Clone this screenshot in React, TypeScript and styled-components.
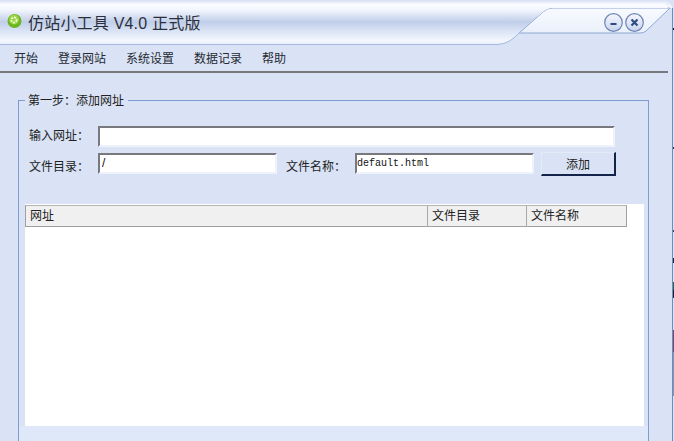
import React, { FunctionComponent } from 'react';
import styled, { createGlobalStyle } from 'styled-components';

const GlobalStyle = createGlobalStyle`
  html, body {
    margin: 0;
    padding: 0;
    background: #d9e3f5;
  }
  * {
    box-sizing: border-box;
  }
`;

const Window = styled.div`
  position: relative;
  width: 674px;
  height: 441px;
  overflow: hidden;
  background: #d9e3f5;
  color: #222;
  font-family: 'Liberation Sans', 'Noto Sans CJK SC', sans-serif;
  font-size: 12px;
`;

const TitleBar = styled.div`
  position: relative;
  display: flex;
  align-items: center;
  height: 45px;
  padding: 0 30px 0 7px;
`;

const TitleChrome = styled.svg`
  position: absolute;
  left: 0;
  top: 0;
`;

const AppIcon = styled.svg`
  position: relative;
  flex: none;
  margin: -3px 5px 0 0;
`;

const Title = styled.div`
  position: relative;
  flex: 1;
  font-size: 16px;
  letter-spacing: 0.2px;
  line-height: 22px;
  margin-top: 2px;
  color: #2b2f3c;
  white-space: nowrap;
`;

const RoundButtons = styled.div`
  position: relative;
  display: flex;
  gap: 2px;
`;

const RoundButton = styled.svg`
  display: block;
`;

const MenuBar = styled.div`
  display: flex;
  gap: 20px;
  align-items: center;
  width: 668px;
  height: 28px;
  padding: 0 14px 0;
  border-bottom: 2px solid #77797d;
`;

const MenuItem = styled.div`
  line-height: 26px;
  margin-top: 1px;
  color: #262a33;
`;

const StepBox = styled.div`
  position: relative;
  width: 631px;
  height: 420px;
  margin: 27px 0 0 18px;
  border: 1px solid #7d9dd0;
  padding: 25px 0 0 6px;
`;

const Legend = styled.div`
  position: absolute;
  left: 6px;
  top: -9px;
  padding: 0 4px 0 3px;
  background: #d9e3f5;
  line-height: 18px;
`;

const Form = styled.div`
  display: flex;
  flex-direction: column;
  gap: 6px;
  padding-left: 4px;
`;

const FormRow = styled.div`
  display: flex;
  align-items: center;
  height: 21px;
`;

const Label = styled.label<{ $width: number; $drop?: number; $indent?: number }>`
  flex: none;
  width: ${(p) => p.$width}px;
  padding-left: ${(p) => p.$indent ?? 0}px;
  line-height: 18px;
  margin-top: ${(p) => p.$drop ?? 0}px;
  white-space: nowrap;
`;

const Input = styled.input<{ $width: number; $mono?: boolean }>`
  flex: none;
  width: ${(p) => p.$width}px;
  height: 21px;
  padding: 0 0 1px ${(p) => (p.$mono ? 0 : 2)}px;
  background: #fff;
  border-style: solid;
  border-width: 2px;
  border-color: #77797c #eef2fa #eef2fa #77797c;
  border-radius: 0;
  outline: none;
  color: #111;
  font-family: ${(p) => (p.$mono ? "'Liberation Mono', monospace" : "'Liberation Sans', sans-serif")};
  font-size: ${(p) => (p.$mono ? 10 : 12)}px;
`;

const AddButton = styled.button`
  flex: none;
  width: 75px;
  height: 24px;
  margin: 1px 0 0 7px;
  padding: 0;
  background: #d9e3f5;
  border-style: solid;
  border-width: 1px 2px 2px 1px;
  border-color: #e4ebf8 #14234a #14234a #e4ebf8;
  color: #222;
  font-family: 'Liberation Sans', 'Noto Sans CJK SC', sans-serif;
  font-size: 12px;
`;

const ListPanel = styled.div`
  width: 619px;
  height: 222px;
  margin-top: 30px;
  padding-top: 1px;
  background: #fff;
`;

const ListHeader = styled.div`
  display: grid;
  grid-template-columns: 402px 99px 101px;
  width: 602px;
  height: 22px;
  background: #f0f0f0;
  border: 1px solid #a0a0a0;
  border-top-color: #b4b4b4;
`;

const HeaderCell = styled.div<{ $last?: boolean }>`
  padding-left: 4px;
  line-height: 21px;
  color: #222;
  border-right: ${(p) => (p.$last ? 'none' : '1px solid #a8a8a8')};
`;

const FooterBand = styled.div`
  position: absolute;
  left: 19px;
  top: 426px;
  width: 629px;
  height: 15px;
  background: #dfe8f8;
`;

const Edge = styled.div`
  position: absolute;
  right: 0;
  top: 8px;
  width: 2px;
  height: 433px;
  border-left: 1px solid #6f8bbd;
  background: linear-gradient(
    to bottom,
    #d9e3f5 0 20px,
    #111 20px 22px,
    #d9e3f5 22px 139px,
    #333 139px 141px,
    #d9e3f5 141px 222px,
    #444 222px 224px,
    #d9e3f5 224px 250px,
    #1c2438 250px 255px,
    #d9e3f5 255px 274px,
    #1f6b4e 274px 282px,
    #1c2438 282px 290px,
    #d9e3f5 290px 322px,
    #7a4a6c 322px 344px,
    #8b92ad 344px 388px,
    #d9e3f5 388px 433px
  );
`;

interface RoundProps {
  kind: 'min' | 'close';
}

const Round: FunctionComponent<RoundProps> = ({ kind }) => (
  <RoundButton width="19" height="19" viewBox="0 0 19 19">
    <circle cx="9.5" cy="9.5" r="8.8" fill="url(#roundFill)" stroke="#6d84b5" strokeWidth="1.2" />
    {kind === 'min' ? (
      <rect x="6.5" y="10" width="6" height="2" fill="#2f4a83" />
    ) : (
      <path d="M6.5 6.5l6 6M12.5 6.5l-6 6" stroke="#2f4a83" strokeWidth="2.2" />
    )}
  </RoundButton>
);

const App: FunctionComponent = () => {
  return (
    <Window>
      <GlobalStyle />
      <TitleBar>
        <TitleChrome width="674" height="46" viewBox="0 0 674 46">
          <defs>
            <linearGradient id="mainBand" x1="0" y1="0" x2="0" y2="1">
              <stop offset="0" stopColor="#d5def2" />
              <stop offset="0.1" stopColor="#fbfcff" />
              <stop offset="0.22" stopColor="#f3f6fd" />
              <stop offset="0.5" stopColor="#c0cee9" />
              <stop offset="0.72" stopColor="#dce5f6" />
              <stop offset="0.93" stopColor="#f4f7fd" />
              <stop offset="1" stopColor="#e9effa" />
            </linearGradient>
            <linearGradient id="sideBand" x1="0" y1="0" x2="0" y2="1">
              <stop offset="0" stopColor="#f8faff" />
              <stop offset="1" stopColor="#eaf0fb" />
            </linearGradient>
            <linearGradient id="topStrip" x1="0" y1="0" x2="0" y2="1">
              <stop offset="0" stopColor="#dbe3f5" />
              <stop offset="1" stopColor="#fbfcff" />
            </linearGradient>
            <linearGradient id="roundFill" x1="0" y1="0" x2="0" y2="1">
              <stop offset="0" stopColor="#f6f8fe" />
              <stop offset="1" stopColor="#c7d4ee" />
            </linearGradient>
          </defs>
          <rect x="0" y="0" width="674" height="46" fill="#d9e3f5" />
          <path d="M0 0H664Q671 1 672 8H0Z" fill="url(#topStrip)" />
          <path d="M520 33L543 12Q547 8 553 8H670L646 31Q644 33 640 33Z" fill="url(#sideBand)" />
          <path d="M519 33L543 12Q547 8 553 8H670L646 31Q644 33 640 33Z" fill="none" stroke="#90a8d4" />
          <path d="M0 0H664L668 8H553Q547 8 543 12L522 29Q510 44 498 44H0Z" fill="url(#mainBand)" />
          <path d="M0 44.5H498Q510 44 521 31" fill="none" stroke="#a6b9de" />
        </TitleChrome>
        <AppIcon width="16" height="16" viewBox="0 0 16 16">
          <circle cx="7.5" cy="8" r="7" fill="#6cb61f" />
          <circle cx="7" cy="6.5" r="5" fill="#9ad447" />
          <circle cx="7" cy="7" r="2.6" fill="none" stroke="#f2fbdc" strokeWidth="1.8" strokeDasharray="2 1" />
        </AppIcon>
        <Title>仿站小工具 V4.0 正式版</Title>
        <RoundButtons>
          <Round kind="min" />
          <Round kind="close" />
        </RoundButtons>
      </TitleBar>
      <MenuBar>
        {['开始', '登录网站', '系统设置', '数据记录', '帮助'].map((item) => (
          <MenuItem key={item}>{item}</MenuItem>
        ))}
      </MenuBar>
      <StepBox>
        <Legend>第一步：添加网址</Legend>
        <Form>
          <FormRow>
            <Label $width={69} $drop={-2}>输入网址：</Label>
            <Input $width={517} readOnly value="" />
          </FormRow>
          <FormRow>
            <Label $width={69} $drop={7}>文件目录：</Label>
            <Input $width={179} readOnly value="/" />
            <Label $width={78} $indent={9} $drop={7}>文件名称：</Label>
            <Input $width={179} $mono readOnly value="default.html" />
            <AddButton>添加</AddButton>
          </FormRow>
        </Form>
        <ListPanel>
          <ListHeader>
            <HeaderCell>网址</HeaderCell>
            <HeaderCell>文件目录</HeaderCell>
            <HeaderCell $last>文件名称</HeaderCell>
          </ListHeader>
        </ListPanel>
      </StepBox>
      <FooterBand />
      <Edge />
    </Window>
  );
};

export default App;
